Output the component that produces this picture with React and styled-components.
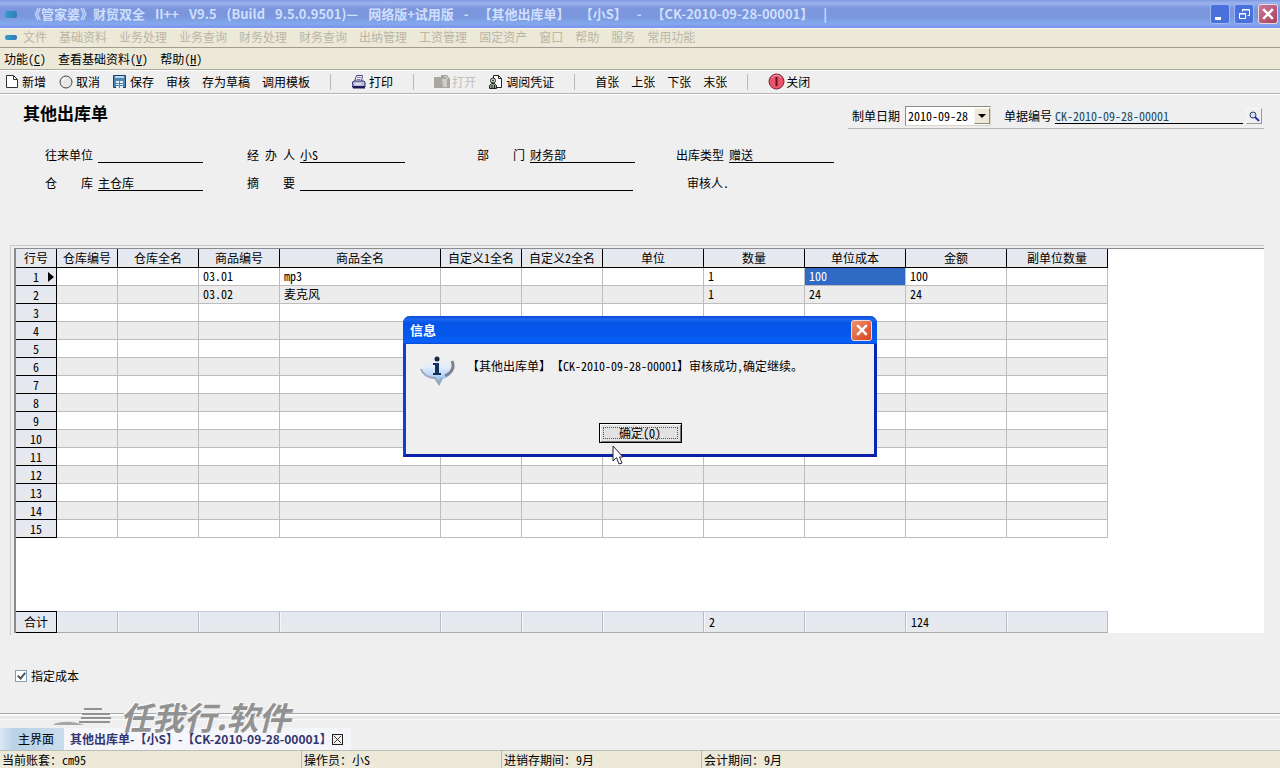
import React from 'react';
import styled, { createGlobalStyle, css } from 'styled-components';

const GlobalStyle = createGlobalStyle`
  * { box-sizing: border-box; }
  body {
    margin: 0;
    background: #efefef;
    color: #000;
    font: 12px/14px "Noto Sans CJK SC", "Liberation Sans", sans-serif;
    font-feature-settings: "hwid";
  }
  button, input, select { font: inherit; font-feature-settings: "hwid"; color: inherit; }
`;

const Page = styled.div`
  position: relative;
  min-height: 100vh;
  display: flex;
  flex-direction: column;
`;

/* ---------- title bar ---------- */
const TitleBar = styled.header`
  height: 28px;
  display: flex;
  align-items: center;
  padding: 0 2px 0 5px;
  background: linear-gradient(#7f9ae0 0, #9db4f0 3px, #7d97de 8px, #7a96dc 16px, #82a9ee 24px, #7c8fe8 28px);
`;
const AppMark = styled.span`
  width: ${p => p.$w}px;
  height: ${p => p.$h}px;
  border-radius: 2px;
  background: linear-gradient(90deg, #2c9fd0, #3a78b8);
`;
const TitleText = styled.h1`
  flex: 1;
  margin: 0 0 0 11px;
  display: flex;
  gap: 10px;
  font: bold 13px/20px "Noto Sans CJK SC", "Liberation Sans", sans-serif;
  font-feature-settings: normal;
  color: #cfdffd;
  white-space: nowrap;
`;
const WindowButtons = styled.div`
  display: flex;
  gap: 4px;
`;
const WindowButton = styled.button`
  width: ${p => p.$size || 20}px;
  height: ${p => p.$size || 20}px;
  padding: 0;
  display: grid;
  place-items: center;
  border: 1px solid ${p => (p.$close ? '#f2d8d4' : '#9fb6f6')};
  border-radius: 3px;
  background: ${p => (p.$close ? p.$bright ? 'linear-gradient(135deg, #f0916f, #d5421c)' : 'linear-gradient(135deg, #c87a9c, #a8405c)' : '#4a70dc')};
  svg { display: block; }
`;

/* ---------- menus ---------- */
const MenuRow = styled.nav`
  display: flex;
  align-items: center;
  gap: 12px;
  background: #ece9d8;
  white-space: nowrap;
  ${p => (p.$faded
    ? css`height: 20px; padding: 0 5px 2px; color: #bab6a6; border-bottom: 1px solid #a09d90; border-top: 1px solid #f8f7f0;`
    : css`height: 22px; padding: 0 4px; border-bottom: 1px solid #aaa9a2;`)}
`;
const MenuLink = styled.a`
  color: inherit;
  text-decoration: none;
`;
const MenuMark = styled.span`
  display: flex;
  gap: 6px;
  align-items: center;
`;

/* ---------- toolbar ---------- */
const Toolbar = styled.div`
  height: 24px;
  display: flex;
  align-items: center;
  padding: 0 4px 1px;
  border-top: 1px solid #fff;
  border-bottom: 1px solid #b4b4b2;
  box-shadow: 0 1px 0 #fff;
`;
const ToolGroup = styled.div`
  display: flex;
  gap: 12px;
`;
const ToolButton = styled.button`
  display: flex;
  align-items: center;
  padding: 0;
  border: 0;
  background: none;
  white-space: nowrap;
  &:disabled { color: #c0c0bc; }
`;
const IconSlot = styled.span`
  width: 18px;
  svg { display: block; }
`;
const Separator = styled.span`
  width: 1px;
  height: 16px;
  margin: 0 20px;
  background: #b9b9b6;
`;

/* ---------- document ---------- */
const Document = styled.main`
  flex: 1;
  padding: 10px 16px 0 10px;
`;
const DocHeader = styled.div`
  display: flex;
  justify-content: space-between;
  align-items: flex-start;
`;
const DocTitle = styled.h2`
  margin: 0 0 0 13px;
  font: bold 17px/18px "Noto Sans CJK SC", "Liberation Sans", sans-serif;
`;
const DocMeta = styled.div`
  display: flex;
  align-items: center;
  height: 25px;
  padding: 0 2px 0 4px;
  border-bottom: 1px solid #b6b6b6;
`;
const MetaLabel = styled.label`
  margin-right: ${p => p.$gap}px;
`;
const DateBox = styled.span`
  display: grid;
  align-items: center;
  justify-items: end;
  width: 86px;
  height: 20px;
  margin-right: 13px;
  border: 1px solid #8d8a80;
  border-right-color: #d8d5c8;
  border-bottom-color: #d8d5c8;
  background: #fff;
  > * { grid-area: 1 / 1; }
`;
const DateSelect = styled.select`
  width: 100%;
  height: 18px;
  padding: 0 0 0 2px;
  border: 0;
  background: none;
  appearance: none;
`;
const ArrowFace = styled.span`
  width: 16px;
  height: 16px;
  display: grid;
  place-items: center;
  pointer-events: none;
  background: #ece9d8;
  border: 1px solid;
  border-color: #f7f5ec #8d8a80 #8d8a80 #f7f5ec;
`;
const NumberInput = styled.input`
  width: 188px;
  height: 16px;
  padding: 0;
  border: 0;
  border-bottom: 1px solid #000;
  background: linear-gradient(90deg, #e9eff4 114px, transparent 114px);
  color: #1d4a5c;
`;
const LookupButton = styled.button`
  width: 16px;
  height: 16px;
  margin-left: 3px;
  padding: 0;
  border: 1px solid;
  border-color: #f8f8f8 #999 #999 #f8f8f8;
  background: #efefef;
  svg { display: block; }
`;
const Form = styled.form`
  display: grid;
  grid-template-columns: 202px 230px 199px 160px;
  row-gap: 12px;
  margin: 18px 0 54px 35px;
`;
const Field = styled.div`
  display: flex;
  gap: 5px;
  grid-column: span ${p => p.$span || 1};
`;
const FieldLabel = styled.label`
  width: 48px;
  padding-top: 1px;
  text-align-last: justify;
  white-space: nowrap;
`;
const Auditor = styled.span`
  padding: 1px 0 0 11px;
`;
const FieldInput = styled.input`
  width: ${p => p.$w || 105}px;
  height: 16px;
  padding: 0 0 1px;
  border: 0;
  border-bottom: 1px solid #000;
  border-radius: 0;
  background: none;
`;

/* ---------- grid ---------- */
const GridFrame = styled.section`
  padding: 2px 0 2px 3px;
  border-top: 1px solid #c9c9c9;
  border-left: 1px solid #c9c9c9;
`;
const GridPanel = styled.div`
  border-top: 1px solid #8a8a8a;
  border-left: 2px solid #8a8a8a;
  background: #fff;
  overflow: hidden;
`;
const Grid = styled.table`
  width: 1092px;
  table-layout: fixed;
  border-collapse: separate;
  border-spacing: 0;
  line-height: 14px;
`;
const headFace = css`
  padding: 0;
  font-weight: normal;
  text-align: center;
  background: linear-gradient(#e4e8f2, #e8e9ec);
  border-right: 1px solid #000;
  border-bottom: 1px solid #000;
`;
const ColumnHead = styled.th`
  ${headFace}
  height: 19px;
`;
const RowHead = styled.th`
  ${headFace}
  height: ${p => (p.$total ? 22 : 18)}px;
  ${p => p.$total && 'border-top: 1px solid #000;'}
`;
const RowMark = styled.span`
  display: grid;
  grid-template-columns: 1fr auto;
  svg { display: block; margin: 2px 2px 0 0; }
  span { padding-left: ${p => (p.$on ? 8 : 0)}px; }
`;
const Cell = styled.td`
  height: 18px;
  padding: 0 4px 1px;
  border-right: 1px solid #bdbdbd;
  border-bottom: 1px solid #bdbdbd;
  background: ${p => (p.$selected ? '#316ac5' : p.$alt ? '#ececec' : '#fff')};
  color: ${p => (p.$selected ? '#fff' : '#000')};
`;
const SpacerCell = styled.td`
  height: 73px;
  padding: 0;
`;
const TotalCell = styled.td`
  height: 22px;
  padding: 0 5px;
  background: linear-gradient(#e4e8f3, #e8e9ec);
  border-top: 1px solid #c6cddb;
  border-right: 1px solid #b9bcc4;
  border-bottom: 1px solid #a9abb0;
  box-shadow: inset 1px 0 0 #f8f8fb;
`;
const CostOption = styled.label`
  display: flex;
  align-items: center;
  gap: 4px;
  width: max-content;
  margin: 34px 0 29px 5px;
`;
const CheckBox = styled.input`
  appearance: none;
  width: 12px;
  height: 12px;
  margin: 0;
  border: 1px solid #7f9db9;
  background: #fff;
  &:checked::before {
    content: "";
    display: block;
    width: 3px;
    height: 6px;
    margin: 0 0 0 3px;
    border: solid #4b5563;
    border-width: 0 2px 2px 0;
    transform: rotate(40deg);
  }
`;

/* ---------- tab strip, status ---------- */
const TabStrip = styled.div`
  position: relative;
  height: 38px;
  display: flex;
  align-items: flex-end;
  border-top: 1px solid #a9a9a9;
  border-bottom: 1px solid #bdbdb8;
  box-shadow: inset 0 2px 0 #fafafa, inset 0 5px 0 #e8e8e8, inset 0 6px 0 #f8f8f8;
`;
const HomeTab = styled.button`
  width: 64px;
  height: 22px;
  padding: 0 0 0 8px;
  border: 0;
  background: linear-gradient(90deg, #dbe8f4, #b9d2e6 14px, #c9dcec);
`;
const ActiveTab = styled.div`
  height: 22px;
  display: flex;
  align-items: center;
  padding: 0 8px 0 6px;
  background: #f5f6fa;
  color: #33356f;
  font: bold 12px/18px "Noto Sans CJK SC", "Liberation Sans", sans-serif;
  font-feature-settings: normal;
`;
const TabClose = styled.button`
  width: 11px;
  height: 11px;
  padding: 0;
  border: 1px solid #222;
  background: #f6efee;
  svg { display: block; }
`;
const Watermark = styled.div`
  position: absolute;
  left: 54px;
  bottom: 19px;
  display: flex;
  align-items: center;
  gap: 8px;
  font: italic bold 32px/30px "Noto Sans CJK SC", "Liberation Sans", sans-serif;
  font-feature-settings: normal;
  color: #929292;
  text-shadow: -1px -1px 0 #fafafa;
  pointer-events: none;
`;
const StatusBar = styled.footer`
  height: 17px;
  display: flex;
  background: #ece9d8;
  line-height: 18px;
`;
const StatusCell = styled.span`
  flex: 0 0 ${p => p.$w}px;
  padding-left: 2px;
  border-right: 1px solid #bbb8a8;
  white-space: nowrap;
  &:last-child { flex: 1; border-right: 0; }
`;

/* ---------- dialog ---------- */
const Dialog = styled.div`
  position: absolute;
  top: 316px;
  left: 50%;
  transform: translateX(-50%);
  width: 474px;
  border: 3px solid #0a3fd8;
  border-top: 0;
  border-right-color: #0a26b4;
  border-bottom-color: #0a20a8;
  border-radius: 7px 7px 0 0;
  background: #efefef;
`;
const DialogTitle = styled.div`
  height: 28px;
  margin: 0 -3px;
  padding: 0 5px 0 7px;
  display: flex;
  align-items: center;
  justify-content: space-between;
  border-radius: 7px 7px 0 0;
  background: linear-gradient(#0a49d0 0, #1a66f0 3px, #0554e6 7px, #0558ee 20px, #0a62fa 26px, #0448d8 28px);
  color: #fff;
  font: bold 13px/20px "Noto Sans CJK SC", "Liberation Sans", sans-serif;
`;
const DialogBody = styled.div`
  display: flex;
  gap: 10px;
  padding: 11px 13px 0;
  height: 79px;
  p { margin: 4px 0 0; white-space: nowrap; }
`;
const DialogActions = styled.div`
  display: flex;
  justify-content: center;
  padding-bottom: 11px;
`;
const OkButton = styled.button`
  width: 83px;
  height: 20px;
  padding: 0;
  border: 1px solid #000;
  background: #e2e2e2;
  box-shadow: inset 1px 1px 0 #fff, inset -1px -1px 0 #777;
  outline: 1px dotted #555;
  outline-offset: -5px;
  line-height: 16px;
`;
const Pointer = styled.svg`
  position: absolute;
  left: 206px;
  top: 129px;
`;

/* ---------- icons ---------- */
const PageIcon = () => (
  <svg width="15" height="15" viewBox="0 0 15 15" fill="#fff" stroke="#333">
    <path d="M2.500 1.500h7l4 4v8h-11z" /><path d="M9.500 1.500v4h4" fill="none" />
  </svg>
);
const CircleIcon = () => (
  <svg width="15" height="15" viewBox="0 0 15 15"><circle cx="8" cy="8" r="6" fill="#e8e8e6" stroke="#444" /><path d="M5 7a3 3 0 0 1 3-3" stroke="#fff" fill="none" /></svg>
);
const SaveIcon = () => (
  <svg width="15" height="15" viewBox="0 0 15 15">
    <path d="M1.500 1.500h12v12h-12z" fill="#4f86b4" stroke="#1e3f66" />
    <path d="M3 2h9v2H3z" fill="#b8dcf0" /><path d="M4 7h7v7H4z" fill="#e6f1f8" />
    <path d="M4 9.500h7M4 11.500h7M7.500 7v7" stroke="#4f86b4" />
  </svg>
);
const PrinterIcon = () => (
  <svg width="15" height="15" viewBox="0 0 15 15">
    <path d="M5.500 1.500h6l-1 6h-7z" fill="#fff" stroke="#444480" /><path d="M6 3.500h4M5.500 5.500h4" stroke="#7777aa" />
    <path d="M1.500 8l2-1h9l1.500 1v5h-12z" fill="#b9b9dc" stroke="#26265e" /><path d="M1 12h13v2.500H2z" fill="#1c1c58" /><path d="M4 10h6" stroke="#fff" />
  </svg>
);
const DisabledIcon = () => (
  <svg width="16" height="15" viewBox="0 0 16 15">
    <path d="M0 3h7V1h6l3 4v9H0z" fill="#a9a79f" /><path d="M8 5h5v8H9z" fill="#cfcdc6" /><path d="M11 2l3 3" stroke="#e8e6e0" />
  </svg>
);
const VoucherIcon = () => (
  <svg width="15" height="16" viewBox="0 0 15 16" stroke="#222">
    <path d="M5.500 1.500h5l3 3v9h-8z" fill="#fff" /><path d="M10.500 1.500v3h3" fill="none" />
    <circle cx="5" cy="6.500" r="2.500" fill="#d8e4d0" /><circle cx="5" cy="6.500" r=".5" />
    <path d="M1.500 14.500v-3l2-2h3l2 2v3z" fill="#8fae88" /><path d="M4 11v3M6.500 11v3" />
  </svg>
);
const CloseIcon = () => (
  <svg width="17" height="17" viewBox="0 0 17 17"><circle cx="8.500" cy="8.500" r="7.500" fill="#e8546a" stroke="#7e1d32" /><path d="M4 5a5 5 0 0 1 9 0" stroke="#f7a6b0" fill="none" /><path d="M8.500 4v9" stroke="#6c1026" strokeWidth="2" /></svg>
);
const Cross = ({ size = 10, color = '#fff', weight = 2 }) => (
  <svg width={size} height={size} viewBox="0 0 10 10"><path d="M1 1l8 8M9 1l-8 8" stroke={color} strokeWidth={weight} /></svg>
);
const InfoIcon = () => (
  <svg width="38" height="34" viewBox="0 0 38 34">
    <defs>
      <linearGradient id="bubble" x1="0" y1="0" x2="0" y2="1"><stop offset="0" stopColor="#efefef" /><stop offset=".3" stopColor="#e4eefa" /><stop offset=".6" stopColor="#bcd8f6" /><stop offset="1" stopColor="#6aa2dc" /></linearGradient>
    </defs>
    <path d="M4 14c2 7 8 10 12 10l4 6 3-6c6-1 11-5 11-11 0-3-1-5-3-7-4-3-18-4-24 1-2 2-3 4-3 7z" fill="url(#bubble)" />
    <path d="M33 6c3 7-1 12-7 15" stroke="#7c828e" strokeWidth="3" fill="none" />
    <path d="M2 14c3 8 9 9 14 9l4 6 3-6" stroke="#9aa6b8" strokeWidth="2" fill="none" />
    <circle cx="18" cy="4" r="2.500" fill="#1c2740" />
    <path d="M14 8h6v10h2v2h-8v-2h2v-8h-2z" fill="#14305e" />
  </svg>
);

/* ---------- data ---------- */
const titleParts = ['《管家婆》财贸双全', 'II++', 'V9.5', '(Build', '9.5.0.9501)—', '网络版+试用版', '-', '【其他出库单】', '【小S】', '-', '【CK-2010-09-28-00001】', '|'];
const mainMenu = ['文件', '基础资料', '业务处理', '业务查询', '财务处理', '财务查询', '出纳管理', '工资管理', '固定资产', '窗口', '帮助', '服务', '常用功能'];
const docMenu = [['功能', 'C'], ['查看基础资料', 'V'], ['帮助', 'H']];
const toolGroups = [
  [['新增', PageIcon], ['取消', CircleIcon], ['保存', SaveIcon], ['审核'], ['存为草稿'], ['调用模板']],
  [['打印', PrinterIcon]],
  [['打开', DisabledIcon, true], ['调阅凭证', VoucherIcon]],
  [['首张'], ['上张'], ['下张'], ['末张']],
  [['关闭', CloseIcon]],
];
const columns = [
  ['行号', 41], ['仓库编号', 61], ['仓库全名', 81], ['商品编号', 81], ['商品全名', 161], ['自定义1全名', 81],
  ['自定义2全名', 81], ['单位', 101], ['数量', 101], ['单位成本', 101], ['金额', 101], ['副单位数量', 101],
];
const records = [
  ['', '', '03.01', 'mp3', '', '', '', '1', '100', '100', ''],
  ['', '', '03.02', '麦克风', '', '', '', '1', '24', '24', ''],
];
const emptyRecord = Array(11).fill('');
const rows = Array.from({ length: 15 }, (_, i) => records[i] || emptyRecord);
const totals = ['', '', '', '', '', '', '', '2', '', '124', ''];
const status = [['当前账套：cm95', 302], ['操作员：小S', 200], ['进销存期间：9月', 200], ['会计期间：9月', 200]];

function FormField({ id, label, value = '', width, span }) {
  return (
    <Field $span={span}>
      <FieldLabel htmlFor={id}>{label}</FieldLabel>
      <FieldInput id={id} defaultValue={value} $w={width} />
    </Field>
  );
}

export default function App() {
  return (
    <Page>
      <GlobalStyle />
      <TitleBar>
        <AppMark $w={12} $h={7} />
        <TitleText>{titleParts.map((t, i) => <span key={i}>{t}</span>)}</TitleText>
        <WindowButtons>
          <WindowButton aria-label="最小化"><svg width="12" height="12"><path d="M1 9h6v3H1z" fill="#fff" /></svg></WindowButton>
          <WindowButton aria-label="还原">
            <svg width="12" height="12" fill="none" stroke="#fff"><path d="M4.500 3.500v-2h7v6h-2M4 2h8" /><path d="M1.500 5.500h6v5h-6zM1 6h7" /></svg>
          </WindowButton>
          <WindowButton $close aria-label="关闭窗口"><Cross size={12} /></WindowButton>
        </WindowButtons>
      </TitleBar>

      <MenuRow $faded>
        <MenuMark><AppMark $w={12} $h={5} /><MenuLink href="#">{mainMenu[0]}</MenuLink></MenuMark>
        {mainMenu.slice(1).map(m => <MenuLink href="#" key={m}>{m}</MenuLink>)}
      </MenuRow>
      <MenuRow>
        {docMenu.map(([m, k]) => <MenuLink href="#" key={m}>{m}(<u>{k}</u>)</MenuLink>)}
      </MenuRow>

      <Toolbar>
        {toolGroups.map((group, g) => (
          <React.Fragment key={g}>
            {g > 0 && <Separator />}
            <ToolGroup>
              {group.map(([text, Icon, disabled]) => (
                <ToolButton key={text} disabled={disabled}>{Icon && <IconSlot><Icon /></IconSlot>}{text}</ToolButton>
              ))}
            </ToolGroup>
          </React.Fragment>
        ))}
      </Toolbar>

      <Document>
        <DocHeader>
          <DocTitle>其他出库单</DocTitle>
          <DocMeta>
            <MetaLabel $gap={5} htmlFor="date">制单日期</MetaLabel>
            <DateBox>
              <DateSelect id="date"><option>2010-09-28</option></DateSelect>
              <ArrowFace><svg width="8" height="4"><path d="M0 0h8L4 4z" /></svg></ArrowFace>
            </DateBox>
            <MetaLabel $gap={3} htmlFor="number">单据编号</MetaLabel>
            <NumberInput id="number" defaultValue="CK-2010-09-28-00001" />
            <LookupButton aria-label="查找">
              <svg width="14" height="14"><circle cx="6" cy="6" r="3" fill="#cfe4f4" stroke="#333a66" /><path d="M8 8l4 4" stroke="#2233aa" strokeWidth="2" /></svg>
            </LookupButton>
          </DocMeta>
        </DocHeader>

        <Form>
          <FormField id="partner" label="往来单位" />
          <FormField id="handler" label="经 办 人" value="小S" />
          <FormField id="dept" label="部 门" value="财务部" />
          <FormField id="kind" label="出库类型" value="赠送" />
          <FormField id="store" label="仓 库" value="主仓库" />
          <FormField id="memo" label="摘 要" width={333} span={2} />
          <Field><Auditor>审核人.</Auditor></Field>
        </Form>

        <GridFrame>
          <GridPanel>
            <Grid>
              <colgroup>{columns.map(([n, w]) => <col key={n} width={w} />)}</colgroup>
              <thead><tr>{columns.map(([n]) => <ColumnHead key={n} scope="col">{n}</ColumnHead>)}</tr></thead>
              <tbody>
                {rows.map((row, r) => (
                  <tr key={r}>
                    <RowHead scope="row">
                      <RowMark $on={r === 0}>
                        <span>{r + 1}</span>
                        {r === 0 && <svg width="6" height="10"><path d="M0 0l6 5-6 5z" /></svg>}
                      </RowMark>
                    </RowHead>
                    {row.map((v, c) => <Cell key={c} $alt={r % 2 === 1} $selected={r === 0 && c === 8}>{v}</Cell>)}
                  </tr>
                ))}
                <tr><SpacerCell colSpan={12} /></tr>
              </tbody>
              <tfoot>
                <tr><RowHead $total scope="row">合计</RowHead>{totals.map((v, c) => <TotalCell key={c}>{v}</TotalCell>)}</tr>
              </tfoot>
            </Grid>
          </GridPanel>
        </GridFrame>

        <CostOption><CheckBox type="checkbox" defaultChecked />指定成本</CostOption>
      </Document>

      <TabStrip>
        <Watermark aria-hidden="true">
          <svg width="58" height="22" fill="none" stroke="#929292">
            <path d="M30 4h18M28 9h28M27 13h30M25 17h31" strokeWidth="2" /><path d="M0 19c10-4 22-2 30 1H0z" fill="#a5a5a5" stroke="none" />
          </svg>
          <span>任我行.软件</span>
        </Watermark>
        <HomeTab>主界面</HomeTab>
        <ActiveTab>
          <span>其他出库单-【小S】-【CK-2010-09-28-00001】</span>
          <TabClose aria-label="关闭标签"><Cross size={9} color="#222" weight={1} /></TabClose>
        </ActiveTab>
      </TabStrip>
      <StatusBar>{status.map(([t, w]) => <StatusCell key={t} $w={w}>{t}</StatusCell>)}</StatusBar>

      <Dialog role="dialog" aria-labelledby="dialog-title">
        <DialogTitle>
          <span id="dialog-title">信息</span>
          <WindowButton $close $bright $size={21} aria-label="关闭对话框"><Cross size={12} /></WindowButton>
        </DialogTitle>
        <DialogBody>
          <InfoIcon />
          <p>【其他出库单】【CK-2010-09-28-00001】审核成功，确定继续。</p>
        </DialogBody>
        <DialogActions><OkButton>确定(O)</OkButton></DialogActions>
        <Pointer width="12" height="20" viewBox="0 0 12 20"><path d="M1 1v15l3.500-3.500L7 19l3-1-2.500-6H11z" fill="#fff" stroke="#223" /></Pointer>
      </Dialog>
    </Page>
  );
}
